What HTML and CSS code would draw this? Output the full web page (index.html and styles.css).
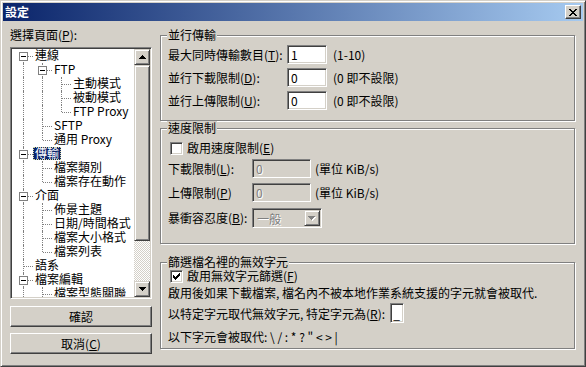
FILE: index.html
```html
<!DOCTYPE html>
<html lang="zh-Hant">
<head>
    <meta charset="UTF-8">
    <title>設定</title>
    <link rel="stylesheet" href="styles.css">
</head>
<body>
    <div class="window">
        <div class="titlebar">
            <span class="title">設定</span>
            <button class="close">
                <svg width="8" height="7" viewBox="0 0 8 7"><path d="M0 0h2v1H0zM6 0h2v1H6zM1 1h2v1H1zM5 1h2v1H5zM2 2h4v1H2zM3 3h2v1H3zM2 4h4v1H2zM1 5h2v1H1zM5 5h2v1H5zM0 6h2v1H0zM6 6h2v1H6z"/></svg>
            </button>
        </div>

        <div class="dialog">
            <div class="side">
                <div class="side-label">選擇頁面(<u>P</u>):</div>
                <div class="tree">
                    <div class="tree-view">
                        <ul class="tree-list">
                            <li class="row"><span class="cell f"><span class="exp"></span></span><span class="node">連線</span></li>
                            <li class="row"><span class="cell i"></span><span class="cell t"><span class="exp"></span></span><span class="node">FTP</span></li>
                            <li class="row"><span class="cell i"></span><span class="cell i"></span><span class="cell t"></span><span class="node">主動模式</span></li>
                            <li class="row"><span class="cell i"></span><span class="cell i"></span><span class="cell t"></span><span class="node">被動模式</span></li>
                            <li class="row"><span class="cell i"></span><span class="cell i"></span><span class="cell l"></span><span class="node">FTP Proxy</span></li>
                            <li class="row"><span class="cell i"></span><span class="cell t"></span><span class="node">SFTP</span></li>
                            <li class="row"><span class="cell i"></span><span class="cell l"></span><span class="node">通用 Proxy</span></li>
                            <li class="row"><span class="cell t"><span class="exp"></span></span><span class="node selected">傳輸</span></li>
                            <li class="row"><span class="cell i"></span><span class="cell t"></span><span class="node">檔案類別</span></li>
                            <li class="row"><span class="cell i"></span><span class="cell l"></span><span class="node">檔案存在動作</span></li>
                            <li class="row"><span class="cell t"><span class="exp"></span></span><span class="node">介面</span></li>
                            <li class="row"><span class="cell i"></span><span class="cell t"></span><span class="node">佈景主題</span></li>
                            <li class="row"><span class="cell i"></span><span class="cell t"></span><span class="node">日期/時間格式</span></li>
                            <li class="row"><span class="cell i"></span><span class="cell t"></span><span class="node">檔案大小格式</span></li>
                            <li class="row"><span class="cell i"></span><span class="cell l"></span><span class="node">檔案列表</span></li>
                            <li class="row"><span class="cell t"></span><span class="node">語系</span></li>
                            <li class="row"><span class="cell t"><span class="exp"></span></span><span class="node">檔案編輯</span></li>
                            <li class="row"><span class="cell i"></span><span class="cell t"></span><span class="node">檔案型態關聯</span></li>
                        </ul>
                    </div>
                    <div class="vscroll">
                        <div class="sb-btn"><svg width="7" height="4" viewBox="0 0 7 4"><path d="M3 0h1v1h1v1h1v1h1v1H0V3h1V2h1V1h1z"/></svg></div>
                        <div class="sb-thumb"></div>
                        <div class="sb-track"></div>
                        <div class="sb-btn"><svg width="7" height="4" viewBox="0 0 7 4"><path d="M0 0h7v1H6v1H5v1H4v1H3V3H2V2H1V1H0z"/></svg></div>
                    </div>
                </div>
                <button class="btn ok">確認</button>
                <button class="btn cancel">取消(<u>C</u>)</button>
            </div>

            <div class="pages">
                <div class="group g-parallel">
                    <span class="group-title">並行傳輸</span>
                    <div class="frow">
                        <span class="flabel w1">最大同時傳輸數目(<u>T</u>):</span>
                        <input class="field num" value="1">
                        <span class="unit">(1-10)</span>
                    </div>
                    <div class="frow">
                        <span class="flabel w1">並行下載限制(<u>D</u>):</span>
                        <input class="field num" value="0">
                        <span class="unit">(0 即不設限)</span>
                    </div>
                    <div class="frow">
                        <span class="flabel w1">並行上傳限制(<u>U</u>):</span>
                        <input class="field num" value="0">
                        <span class="unit">(0 即不設限)</span>
                    </div>
                </div>

                <div class="group g-speed">
                    <span class="group-title">速度限制</span>
                    <div class="crow">
                        <span class="check"></span>
                        <span>啟用速度限制(<u>E</u>)</span>
                    </div>
                    <div class="frow r-down">
                        <span class="flabel w2">下載限制(<u>L</u>):</span>
                        <input class="field rate" value="0" disabled>
                        <span class="unit u2">(單位 KiB/s)</span>
                    </div>
                    <div class="frow r-up">
                        <span class="flabel w2">上傳限制(<u>P</u>)</span>
                        <input class="field rate" value="0" disabled>
                        <span class="unit u2">(單位 KiB/s)</span>
                    </div>
                    <div class="frow r-burst">
                        <span class="flabel w2">暴衝容忍度(<u>B</u>):</span>
                        <div class="combo">
                            <span class="combo-text">一般</span>
                            <span class="combo-btn"><svg width="8" height="5" viewBox="0 0 8 5"><path fill="#fff" d="M1 1h7v1H7v1H6v1H5v1H4V4H3V3H2V2H1z"/><path fill="#808080" d="M0 0h7v1H6v1H5v1H4v1H3V3H2V2H1V1H0z"/></svg></span>
                        </div>
                    </div>
                </div>

                <div class="group g-filter">
                    <span class="group-title">篩選檔名裡的無效字元</span>
                    <div class="crow">
                        <span class="check checked"><svg width="7" height="7" viewBox="0 0 7 7"><path d="M6 0h1v3H6v1H5v1H4v1H3v1H2V6H1V5H0V2h1v1h1v1h1V3h1V2h1V1h1z"/></svg></span>
                        <span>啟用無效字元篩選(<u>F</u>)</span>
                    </div>
                    <div class="line l-info">啟用後如果下載檔案, 檔名內不被本地作業系統支援的字元就會被取代.</div>
                    <div class="frow l-repl">
                        <span>以特定字元取代無效字元, 特定字元為(<u>R</u>):</span>
                        <input class="field tiny" value="_">
                    </div>
                    <div class="line l-chars">以下字元會被取代: \ / : * ? &quot; &lt; &gt; |</div>
                </div>
            </div>
        </div>
    </div>
</body>
</html>
```

FILE: styles.css
```css
body {
    margin: 0;
    background: #d4d0c8;
    font-family: "Noto Sans CJK TC", sans-serif;
    font-size: 12px;
    color: #000;
}
ul {
    margin: 0;
    padding: 0;
    list-style: none;
}
u {
    text-decoration: underline;
    text-underline-offset: 1px;
}

/* window frame */
.window {
    width: 586px;
    height: 367px;
    box-sizing: border-box;
    border: 1px solid;
    border-color: #d4d0c8 #404040 #404040 #d4d0c8;
    box-shadow: inset 1px 1px #fff, inset -1px -1px #808080;
    padding: 2px;
    display: flex;
    flex-direction: column;
    background: #d4d0c8;
}
.titlebar {
    height: 18px;
    flex: none;
    display: flex;
    align-items: center;
    justify-content: space-between;
    padding: 0 2px;
    background: linear-gradient(to right, #0a246a, #a6caf0);
    color: #fff;
}
.title {
    font-weight: bold;
    line-height: 14px;
}
.close {
    width: 16px;
    height: 14px;
    padding: 0;
    box-sizing: border-box;
    border: 1px solid;
    border-color: #fff #404040 #404040 #fff;
    box-shadow: inset -1px -1px #808080;
    background: #d4d0c8;
    display: flex;
    align-items: center;
    justify-content: center;
}
.close svg {
    display: block;
}

.dialog {
    flex: 1;
    display: flex;
    gap: 8px;
    padding: 0 8px 0 7px;
}

/* left column */
.side {
    width: 142px;
    flex: none;
    display: flex;
    flex-direction: column;
}
.side-label {
    margin-top: 7px;
    height: 14px;
    line-height: 14px;
}
.tree {
    margin-top: 5px;
    height: 252px;
    box-sizing: border-box;
    border: 1px solid;
    border-color: #808080 #fff #fff #808080;
    box-shadow: inset 1px 1px #404040, inset -1px -1px #d4d0c8;
    padding: 1px;
    background: #fff;
    display: flex;
}
.tree-view {
    flex: 1;
    overflow: hidden;
    background: #fff;
}
.tree-list {
    padding-left: 2px;
}
.row {
    height: 14px;
    display: flex;
    align-items: flex-start;
    white-space: nowrap;
}
.cell {
    width: 19px;
    height: 14px;
    flex: none;
    position: relative;
}
.cell::before,
.cell::after {
    content: "";
    position: absolute;
}
.cell.i::before,
.cell.t::before {
    left: 9px;
    top: 0;
    bottom: 0;
    border-left: 1px dotted #808080;
}
.cell.l::before {
    left: 9px;
    top: 0;
    height: 7px;
    border-left: 1px dotted #808080;
}
.cell.f::before {
    left: 9px;
    top: 7px;
    bottom: 0;
    border-left: 1px dotted #808080;
}
.cell.t::after,
.cell.l::after,
.cell.f::after {
    left: 10px;
    right: 0;
    top: 7px;
    border-top: 1px dotted #808080;
}
.exp {
    position: absolute;
    left: 5px;
    top: 3px;
    width: 9px;
    height: 9px;
    box-sizing: border-box;
    border: 1px solid #808080;
    background: #fff;
    z-index: 1;
}
.exp::after {
    content: "";
    position: absolute;
    left: 1px;
    top: 3px;
    width: 5px;
    height: 1px;
    background: #000;
}
.node {
    padding: 0 2px;
    height: 13px;
    line-height: 12px;
    box-sizing: border-box;
}
.node.selected {
    background: #0a246a;
    color: #fff;
    outline: 1px dotted #d8d8a0;
    outline-offset: -1px;
}

/* scrollbar */
.vscroll {
    width: 16px;
    flex: none;
    display: flex;
    flex-direction: column;
}
.sb-btn,
.sb-thumb {
    box-sizing: border-box;
    border: 1px solid;
    border-color: #d4d0c8 #404040 #404040 #d4d0c8;
    box-shadow: inset 1px 1px #fff, inset -1px -1px #808080;
    background: #d4d0c8;
}
.sb-btn {
    height: 16px;
    display: flex;
    align-items: center;
    justify-content: center;
}
.sb-btn svg {
    display: block;
}
.sb-thumb {
    height: 176px;
}
.sb-track {
    flex: 1;
    background: repeating-conic-gradient(#d4d0c8 0 25%, #fff 0 50%) 0 0 / 2px 2px;
}

/* push buttons */
.btn {
    height: 21px;
    margin-top: 7px;
    padding: 0;
    box-sizing: border-box;
    border: 1px solid;
    border-color: #fff #404040 #404040 #fff;
    box-shadow: inset -1px -1px #808080;
    background: #d4d0c8;
    font: inherit;
    color: #000;
    line-height: 14px;
}
.btn.cancel {
    margin-top: 6px;
}

/* right column */
.pages {
    flex: 1;
    display: flex;
    flex-direction: column;
}
.group {
    position: relative;
    border: 1px solid #808080;
    box-shadow: inset 1px 1px #fff, 1px 1px #fff;
    padding-left: 7px;
}
.group-title {
    position: absolute;
    top: -8px;
    left: 6px;
    padding: 0 1px;
    line-height: 14px;
    background: #d4d0c8;
}
.g-parallel {
    margin-top: 14px;
    padding-top: 9px;
    padding-bottom: 10px;
    display: flex;
    flex-direction: column;
    gap: 4px;
}
.g-speed {
    margin-top: 7px;
    padding-top: 12px;
    padding-bottom: 15px;
}
.g-filter {
    margin-top: 18px;
    padding-top: 6px;
    padding-bottom: 4px;
}

.frow {
    display: flex;
    align-items: center;
    white-space: nowrap;
}
.flabel {
    flex: none;
    line-height: 14px;
}
.w1 {
    width: 119px;
}
.w2 {
    width: 84px;
}
.unit {
    margin-left: 6px;
}
.unit.u2 {
    margin-left: 4px;
}

.field {
    box-sizing: border-box;
    height: 19px;
    margin: 0;
    border: 1px solid;
    border-color: #808080 #fff #fff #808080;
    box-shadow: inset 1px 1px #404040, inset -1px -1px #d4d0c8;
    background: #fff;
    padding: 0 3px;
    font: inherit;
    color: #000;
    outline: none;
}
.field:disabled {
    background: #d4d0c8;
    color: #808080;
    text-shadow: 1px 1px #fff;
}
.num {
    width: 40px;
}
.rate {
    width: 59px;
}
.tiny {
    width: 14px;
    height: 20px;
    padding: 0 2px;
    margin-left: 5px;
}

.r-down {
    margin-top: 4px;
}
.r-up {
    margin-top: 5px;
}
.r-burst {
    margin-top: 6px;
}
.combo {
    width: 70px;
    height: 20px;
    box-sizing: border-box;
    border: 1px solid;
    border-color: #808080 #fff #fff #808080;
    box-shadow: inset 1px 1px #404040, inset -1px -1px #d4d0c8;
    padding: 1px;
    display: flex;
    align-items: center;
}
.combo-text {
    flex: 1;
    padding-left: 3px;
    color: #808080;
    text-shadow: 1px 1px #fff;
}
.combo-btn {
    width: 16px;
    height: 16px;
    box-sizing: border-box;
    border: 1px solid;
    border-color: #d4d0c8 #404040 #404040 #d4d0c8;
    box-shadow: inset 1px 1px #fff, inset -1px -1px #808080;
    display: flex;
    align-items: center;
    justify-content: center;
}

/* checkbox rows */
.crow {
    height: 14px;
    display: flex;
    align-items: center;
    gap: 4px;
    padding-left: 2px;
    line-height: 14px;
}
.check {
    width: 13px;
    height: 13px;
    flex: none;
    box-sizing: border-box;
    border: 1px solid;
    border-color: #808080 #fff #fff #808080;
    box-shadow: inset 1px 1px #404040, inset -1px -1px #d4d0c8;
    background: #fff;
    display: flex;
    align-items: center;
    justify-content: center;
}
.check svg {
    display: block;
}

.line {
    line-height: 14px;
    white-space: nowrap;
}
.l-info {
    margin-top: 3px;
}
.l-repl {
    margin-top: 3px;
    height: 20px;
}
.l-chars {
    margin-top: 7px;
}
```
